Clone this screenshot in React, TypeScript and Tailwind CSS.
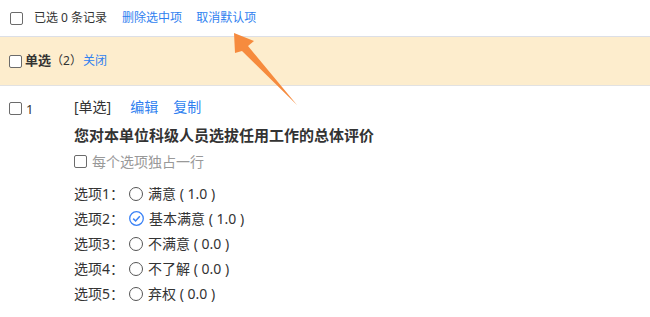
import React from 'react';

const font = { fontFamily: '"Noto Sans", "Noto Sans CJK SC", sans-serif' };

function Box({ size = 13, className = '' }: { size?: number; className?: string }) {
  return (
    <span
      className={`inline-block shrink-0 rounded-[2px] border border-[#6b6b6b] bg-white ${className}`}
      style={{ width: size, height: size }}
    />
  );
}

function Radio({ checked }: { checked?: boolean }) {
  if (checked) {
    return (
      <svg width="15" height="15" viewBox="0 0 15 15" className="shrink-0">
        <circle cx="7.5" cy="7.5" r="6.8" fill="white" stroke="#3b82f6" strokeWidth="1.3" />
        <path d="M4.2 7.6 L6.6 10 L10.8 5.2" fill="none" stroke="#3b82f6" strokeWidth="1.5" />
      </svg>
    );
  }
  return <span className="inline-block h-[14px] w-[14px] shrink-0 rounded-full border border-[#555] bg-white" />;
}

const options = [
  { label: '选项1：', text: '满意', score: '1.0' },
  { label: '选项2：', text: '基本满意', score: '1.0', checked: true },
  { label: '选项3：', text: '不满意', score: '0.0' },
  { label: '选项4：', text: '不了解', score: '0.0' },
  { label: '选项5：', text: '弃权', score: '0.0' },
];

export default function App() {
  return (
    <div className="relative h-[317px] w-[650px] overflow-hidden bg-white text-[#333]" style={font}>
      {/* toolbar */}
      <div className="flex h-[37px] items-center border-b border-[#dcdfe6] pl-[10px] text-[12px]">
        <Box size={13} />
        <span className="ml-[11px]">已选 0 条记录</span>
        <span className="ml-[15px] text-[#2f7ff0]">删除选中项</span>
        <span className="ml-[14px] text-[#2f7ff0]">取消默认项</span>
      </div>

      {/* group header */}
      <div className="flex h-[49px] items-center border-b border-[#e2e2e2] bg-[#fdedcd] pl-[9px]">
        <Box size={13} />
        <span className="ml-[3px] text-[13px] font-bold">单选</span>
        <span className="text-[12px]">（2）</span>
        <span className="ml-[1px] text-[12px] text-[#2f7ff0]">关闭</span>
      </div>

      {/* question */}
      <div className="flex">
        <div className="flex w-[74px] items-start pl-[9px] pt-[16px]">
          <Box size={13} />
          <span className="ml-[4px] text-[13px] leading-[15px]">1</span>
        </div>
        <div className="flex flex-col pt-[10px]">
          <div className="flex h-[20px] items-center text-[14px]">
            <span>[单选]</span>
            <span className="ml-[19px] text-[#2f7ff0]">编辑</span>
            <span className="ml-[15px] text-[#2f7ff0]">复制</span>
          </div>
          <div className="mt-[9px] flex h-[20px] items-center text-[15px] font-bold">
            您对本单位科级人员选拔任用工作的总体评价
          </div>
          <div className="mt-[6px] flex h-[20px] items-center text-[14px] text-[#999]">
            <Box size={13} />
            <span className="ml-[5px]">每个选项独占一行</span>
          </div>
          <div className="mt-[10px] flex flex-col">
            {options.map((o) => (
              <div key={o.label} className="flex h-[25px] items-center text-[14px]">
                <span className="w-[55px]">{o.label}</span>
                <Radio checked={o.checked} />
                <span className="ml-[5px]">{o.text} ( {o.score} )</span>
              </div>
            ))}
          </div>
        </div>
      </div>

      {/* annotation arrow */}
      <svg className="pointer-events-none absolute left-0 top-0" width="650" height="317">
        <polygon
          points="234,33 254,41 248,46 297,105 242,51 235,53"
          fill="#f68b3e"
        />
      </svg>
    </div>
  );
}
